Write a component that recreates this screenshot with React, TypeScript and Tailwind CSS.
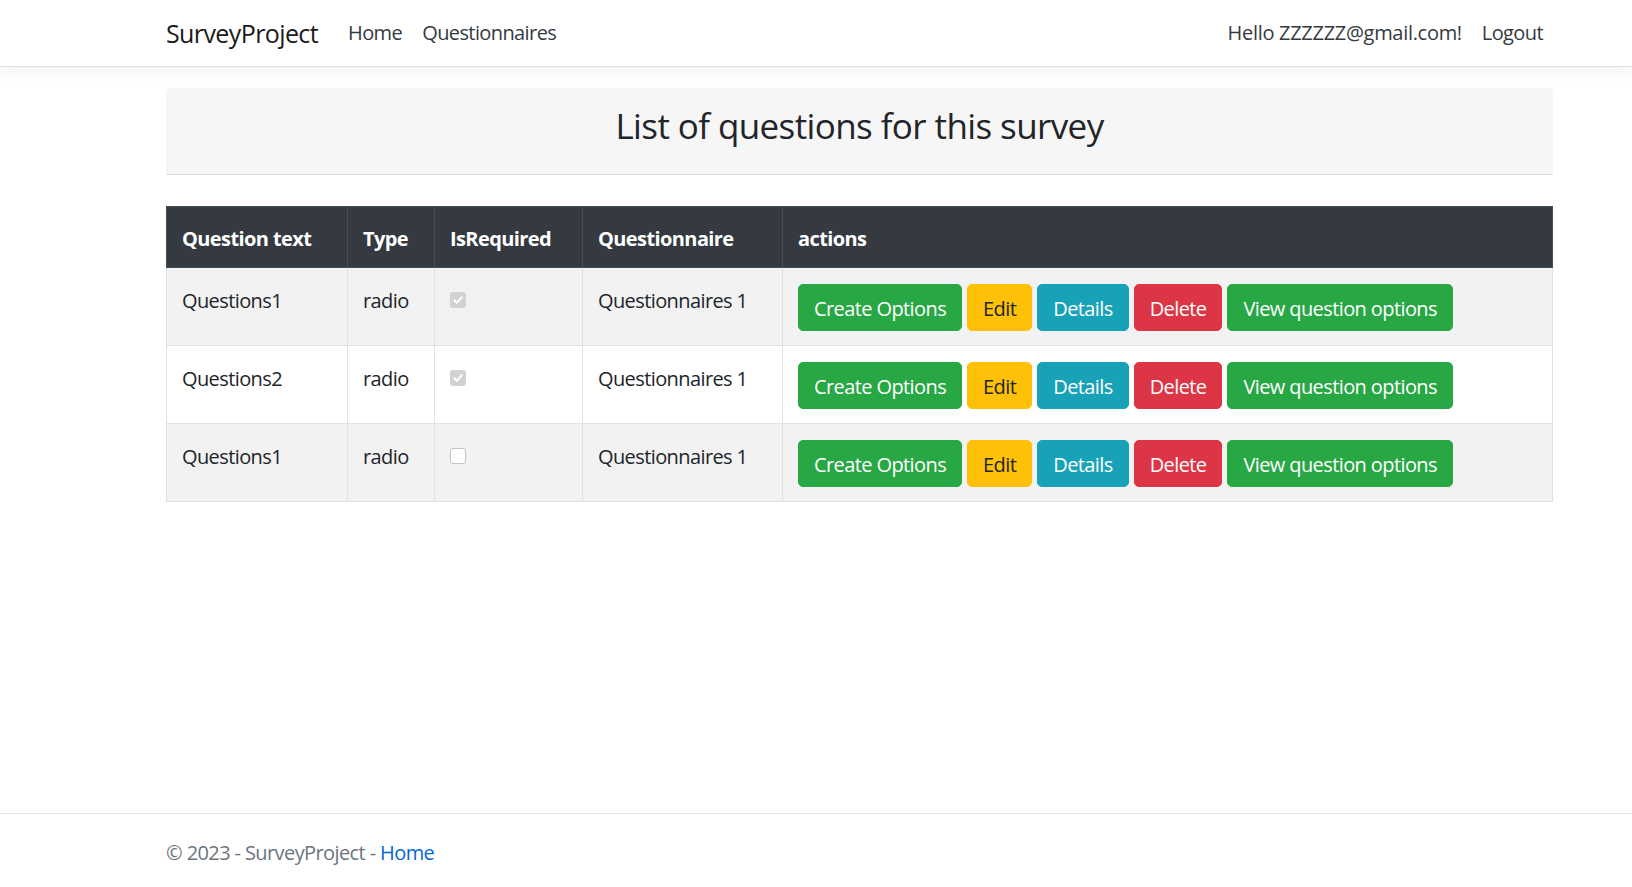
import React from "react";

const rows = [
  { q: "Questions1", type: "radio", req: true, qn: "Questionnaires 1" },
  { q: "Questions2", type: "radio", req: true, qn: "Questionnaires 1" },
  { q: "Questions1", type: "radio", req: false, qn: "Questionnaires 1" },
];

function Check({ on }: { on: boolean }) {
  if (on) {
    return (
      <span className="mt-[6px] flex h-[16px] w-[16px] items-center justify-center rounded-[3px] bg-[#d2d2d2]">
        <svg width="12" height="12" viewBox="0 0 12 12">
          <path d="M2.2 6.3 L4.8 8.8 L9.8 3.2" fill="none" stroke="#ffffff" strokeWidth="2" strokeLinecap="round" strokeLinejoin="round" />
        </svg>
      </span>
    );
  }
  return <span className="mt-[6px] block h-[16px] w-[16px] rounded-[3px] border border-[#c4c4c4] bg-white" />;
}

function Btn({ children, cls }: { children: React.ReactNode; cls: string }) {
  return (
    <span className={`inline-block rounded-[5px] border px-[15px] pt-[9px] pb-[6px] text-[20px] leading-[30px] ${cls}`}>
      {children}
    </span>
  );
}

export default function App() {
  return (
    <div className="flex min-h-[887px] flex-col bg-white font-['Open_Sans',sans-serif] text-[20px] text-[#212529] tracking-[-0.03em]">
      <header className="h-[67px] border-b border-[#e0e0e0] bg-white shadow-[0_5px_15px_rgba(0,0,0,0.05)]">
        <nav className="ml-[166px] flex h-[66px] w-[1387px] items-center">
          <span className="mr-[20px] text-[25px] leading-[37px] text-[#1a1a1a]">SurveyProject</span>
          <span className="px-[10px] leading-[30px] text-[#343a40]">Home</span>
          <span className="px-[10px] leading-[30px] text-[#343a40]">Questionnaires</span>
          <div className="ml-auto flex items-center">
            <span className="px-[10px] leading-[30px] text-[#343a40] tracking-[-0.015em]">Hello ZZZZZZ@gmail.com!</span>
            <span className="px-[10px] leading-[30px] text-[#343a40]">Logout</span>
          </div>
        </nav>
      </header>

      <main className="ml-[166px] flex-1 w-[1387px] pt-[21px]">
        <div className="h-[87px] rounded-t-[5px] border-b border-[#dcdcdc] bg-[#f6f6f6] pt-[17px] text-center">
          <h3 className="text-[35px] leading-[42px] font-normal text-[#212529]">List of questions for this survey</h3>
        </div>

        <table className="mt-[31px] w-[1387px] table-fixed border-collapse">
          <colgroup>
            <col className="w-[181px]" />
            <col className="w-[87px]" />
            <col className="w-[148px]" />
            <col className="w-[200px]" />
            <col />
          </colgroup>
          <thead>
            <tr className="bg-[#343a40] text-white">
              {["Question text", "Type", "IsRequired", "Questionnaire", "actions"].map((h) => (
                <th key={h} className="border border-[#454d55] px-[15px] pt-[17px] pb-[13px] text-left align-top font-bold leading-[30px]">
                  {h}
                </th>
              ))}
            </tr>
          </thead>
          <tbody>
            {rows.map((r, i) => (
              <tr key={i} className={i % 2 === 0 ? "bg-[#f2f2f2]" : "bg-white"}>
                <td className="border border-[#dee2e6] px-[15px] pt-[18px] pb-[12px] align-top leading-[30px]">{r.q}</td>
                <td className="border border-[#dee2e6] px-[15px] pt-[18px] pb-[12px] align-top leading-[30px]">{r.type}</td>
                <td className="border border-[#dee2e6] px-[15px] pt-[18px] pb-[12px] align-top leading-[30px]">
                  <Check on={r.req} />
                </td>
                <td className="border border-[#dee2e6] px-[15px] pt-[18px] pb-[12px] align-top leading-[30px]">{r.qn}</td>
                <td className="border border-[#dee2e6] px-[15px] pt-[16px] pb-[14px] align-top">
                  <div className="flex gap-[5px]">
                    <Btn cls="border-[#28a745] bg-[#28a745] text-white">Create Options</Btn>
                    <Btn cls="border-[#ffc107] bg-[#ffc107] text-[#212529]">Edit</Btn>
                    <Btn cls="border-[#17a2b8] bg-[#17a2b8] text-white">Details</Btn>
                    <Btn cls="border-[#dc3545] bg-[#dc3545] text-white">Delete</Btn>
                    <Btn cls="border-[#28a745] bg-[#28a745] text-white">View question options</Btn>
                  </div>
                </td>
              </tr>
            ))}
          </tbody>
        </table>
      </main>

      <footer className="h-[74px] border-t border-[#dee2e6]">
        <div className="ml-[166px] pt-[24px] leading-[30px] text-[#6c757d]">
          © 2023 - SurveyProject - <span className="text-[#0366d6]">Home</span>
        </div>
      </footer>
    </div>
  );
}
